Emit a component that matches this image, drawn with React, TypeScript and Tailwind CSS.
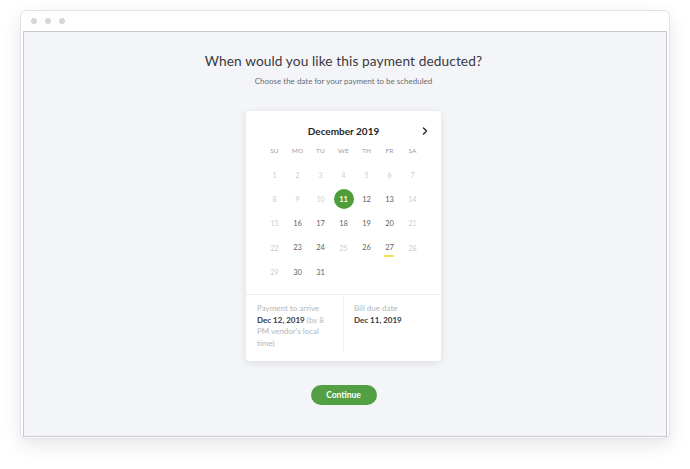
import React from "react";

const F = { fontFamily: "Lato, 'Noto Sans', sans-serif" };

const weeks: (number | null)[][] = [
  [1, 2, 3, 4, 5, 6, 7],
  [8, 9, 10, 11, 12, 13, 14],
  [15, 16, 17, 18, 19, 20, 21],
  [22, 23, 24, 25, 26, 27, 28],
  [29, 30, 31, null, null, null, null],
];

function isEnabled(d: number) {
  if (d < 11) return false;
  const dow = (d - 1) % 7; // 0=Sunday
  if (dow === 0 || dow === 6) return false;
  if (d === 25) return false;
  return true;
}

export default function App() {
  return (
    <div className="w-[690px] h-[469px] bg-white overflow-hidden" style={F}>
      <div className="ml-[20px] mt-[10px] w-[650px] h-[429px] rounded-[6px] bg-white border border-[#e1e2e5] shadow-[0_6px_18px_rgba(0,0,0,0.10)] flex flex-col">
        <div className="h-[20px] flex items-center gap-[8px] pl-[10px]">
          <div className="w-[6px] h-[6px] rounded-full bg-[#d5d7db]" />
          <div className="w-[6px] h-[6px] rounded-full bg-[#d5d7db]" />
          <div className="w-[6px] h-[6px] rounded-full bg-[#d5d7db]" />
        </div>
        <div className="mx-[2px] h-[406px] border border-[#c5c8ce] bg-[#f4f5f8] flex flex-col items-center pr-[3px]">
          <div className="mt-[20px] text-[13.7px] leading-[18px] text-[#393a3d] tracking-[0.1px]">
            When would you like this payment deducted?
          </div>
          <div className="mt-[6px] text-[8px] leading-[10px] text-[#6b6c72]">
            Choose the date for your payment to be scheduled
          </div>
          <div className="mt-[25px] w-[195px] h-[250px] bg-white rounded-[4px] shadow-[0_2px_8px_rgba(0,0,0,0.10)] flex flex-col">
            <div className="relative h-[20px] mt-[10px] flex items-center justify-center">
              <span className="text-[10px] font-bold text-[#242528]">December 2019</span>
              <svg className="absolute right-[12px] top-[6px]" width="8" height="8" viewBox="0 0 8 8">
                <path d="M2.5 1 L5.5 4 L2.5 7" fill="none" stroke="#242528" strokeWidth="1.4" strokeLinecap="round" strokeLinejoin="round" />
              </svg>
            </div>
            <div className="px-[17px]">
              <div className="grid grid-cols-7 h-[20px] items-center">
                {["SU", "MO", "TU", "WE", "TH", "FR", "SA"].map((w) => (
                  <div key={w} className="text-center text-[6.5px] text-[#9a9ca1] tracking-[0.2px]">
                    {w}
                  </div>
                ))}
              </div>
              <div className="mt-[2px] flex flex-col">
                {weeks.map((row, i) => (
                  <div key={i} className="grid grid-cols-7 h-[24.3px] items-center">
                    {row.map((d, j) => (
                      <div key={j} className="flex items-center justify-center h-full relative">
                        {d === null ? null : d === 11 ? (
                          <div className="w-[20px] h-[20px] rounded-full bg-[#4f9c3b] flex items-center justify-center text-white text-[7.5px] font-bold">
                            11
                          </div>
                        ) : (
                          <span
                            className={
                              isEnabled(d)
                                ? "text-[7.5px] text-[#5f6065]"
                                : "text-[7px] text-[#cbccd0]"
                            }
                          >
                            {d}
                          </span>
                        )}
                        {d === 27 && (
                          <div className="absolute left-[6px] bottom-[3px] w-[10px] h-[2px] rounded-full bg-[#f2e24e]" />
                        )}
                      </div>
                    ))}
                  </div>
                ))}
              </div>
            </div>
            <div className="mt-[10px] border-t border-[#eeeff1] flex flex-1">
              <div className="w-[98px] pl-[11px] pr-[8px] pt-[7px] mt-[1px] text-[8px] leading-[11.5px] border-r border-[#eeeff1] mb-[9px]">
                <p className="text-[#b4b6ba]">Payment to arrive</p>
                <p className="text-[#b4b6ba]">
                  <b className="font-bold text-[#393a3d]">Dec 12, 2019</b> (by 8 PM vendor's local time)
                </p>
              </div>
              <div className="pl-[10px] pt-[8px] text-[8px] leading-[11.5px]">
                <div className="text-[#b4b6ba]">Bill due date</div>
                <div className="font-bold text-[#393a3d]">Dec 11, 2019</div>
              </div>
            </div>
          </div>
          <button className="mt-[24px] w-[66px] h-[20px] rounded-full bg-[#52a043] text-white text-[8.5px] font-bold flex items-center justify-center">
            Continue
          </button>
        </div>
      </div>
    </div>
  );
}
